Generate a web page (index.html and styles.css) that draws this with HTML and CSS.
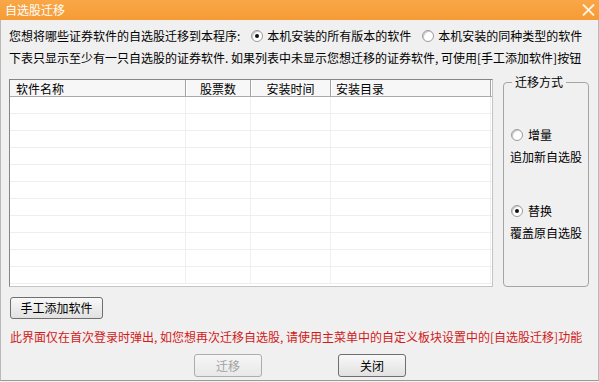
FILE: index.html
```html
<!DOCTYPE html>
<html lang="zh-CN">
<head>
<meta charset="utf-8">
<title>自选股迁移</title>
<link rel="stylesheet" href="styles.css">
</head>
<body>
<div class="window">
  <div class="titlebar">
    <span class="title">自选股迁移</span>
    <svg class="close" width="13" height="12" viewBox="0 0 13 12"><path d="M1 0.5 L12 11.5 M12 0.5 L1 11.5" stroke="#fff3e6" stroke-width="1.8" fill="none"/></svg>
  </div>
  <div class="content">
    <div class="line question">
      <span>您想将哪些证券软件的自选股迁移到本程序:</span>
      <span class="opt opt-a"><span class="radio checked"></span>本机安装的所有版本的软件</span>
      <span class="opt opt-b"><span class="radio"></span>本机安装的同种类型的软件</span>
    </div>
    <div class="line">下表只显示至少有一只自选股的证券软件. 如果列表中未显示您想迁移的证券软件, 可使用[手工添加软件]按钮</div>
    <div class="main">
      <div class="list">
        <div class="list-head">
          <div class="hc c1">软件名称</div>
          <div class="hc c2">股票数</div>
          <div class="hc c3">安装时间</div>
          <div class="hc c4">安装目录</div>
        </div>
        <div class="list-body">
          <div class="row"><div class="cell c1"></div><div class="cell c2"></div><div class="cell c3"></div><div class="cell c4"></div></div>
          <div class="row"><div class="cell c1"></div><div class="cell c2"></div><div class="cell c3"></div><div class="cell c4"></div></div>
          <div class="row"><div class="cell c1"></div><div class="cell c2"></div><div class="cell c3"></div><div class="cell c4"></div></div>
          <div class="row"><div class="cell c1"></div><div class="cell c2"></div><div class="cell c3"></div><div class="cell c4"></div></div>
          <div class="row"><div class="cell c1"></div><div class="cell c2"></div><div class="cell c3"></div><div class="cell c4"></div></div>
          <div class="row"><div class="cell c1"></div><div class="cell c2"></div><div class="cell c3"></div><div class="cell c4"></div></div>
          <div class="row"><div class="cell c1"></div><div class="cell c2"></div><div class="cell c3"></div><div class="cell c4"></div></div>
          <div class="row"><div class="cell c1"></div><div class="cell c2"></div><div class="cell c3"></div><div class="cell c4"></div></div>
          <div class="row"><div class="cell c1"></div><div class="cell c2"></div><div class="cell c3"></div><div class="cell c4"></div></div>
          <div class="row"><div class="cell c1"></div><div class="cell c2"></div><div class="cell c3"></div><div class="cell c4"></div></div>
          <div class="row"><div class="cell c1"></div><div class="cell c2"></div><div class="cell c3"></div><div class="cell c4"></div></div>
        </div>
      </div>
      <fieldset class="group">
        <legend>迁移方式</legend>
        <div class="gopt first"><span class="radio"></span>增量</div>
        <div class="gdesc">追加新自选股</div>
        <div class="gopt second"><span class="radio checked"></span>替换</div>
        <div class="gdesc">覆盖原自选股</div>
      </fieldset>
    </div>
    <div class="add-row"><button class="btn btn-add">手工添加软件</button></div>
    <div class="notice">此界面仅在首次登录时弹出, 如您想再次迁移自选股, 请使用主菜单中的自定义板块设置中的[自选股迁移]功能</div>
    <div class="actions">
      <button class="btn btn-act" disabled>迁移</button>
      <button class="btn btn-act">关闭</button>
    </div>
  </div>
</div>
</body>
</html>
```
FILE: styles.css
```css
* { box-sizing: border-box; }
html, body { margin: 0; padding: 0; }
body {
  width: 599px;
  height: 382px;
  background: #f0f0f0;
  font-family: "Noto Sans CJK SC", "Noto Sans", sans-serif;
  font-size: 12px;
  color: #000;
  overflow: hidden;
}
.window {
  width: 599px;
  height: 382px;
  display: flex;
  flex-direction: column;
}
.titlebar {
  height: 20px;
  flex: none;
  background: linear-gradient(#f9a748, #f69b34);
  display: flex;
  align-items: center;
  justify-content: space-between;
  padding: 0 4px 0 5px;
}
.title {
  color: #fff;
  font-size: 12px;
  line-height: 20px;
}
.close { display: block; margin-top: -1px; }
.content {
  flex: 1;
  background: #f0f0f0;
  border-left: 1px solid #b8b8b8;
  border-right: 1px solid #b8b8b8;
  border-bottom: 1px solid #9a9a9a;
  padding: 5px 0 0 8px;
  display: flex;
  flex-direction: column;
  margin-bottom: 1px;
}
.line {
  height: 22px;
  line-height: 22px;
  white-space: nowrap;
  display: flex;
  align-items: center;
}
.opt { display: flex; align-items: center; }
.opt-a { margin-left: 11px; }
.opt-b { margin-left: 11px; }
.radio {
  display: inline-block;
  width: 12px;
  height: 12px;
  border-radius: 50%;
  border: 1px solid #9c9c9c;
  background: radial-gradient(circle at 60% 60%, #ffffff 50%, #e2e2e2 100%);
  box-shadow: inset 1px 1px 0 #c8c8c8;
  margin-right: 4px;
  position: relative;
  flex: none;
}
.radio.checked::after {
  content: "";
  position: absolute;
  left: 3px;
  top: 3px;
  width: 4px;
  height: 4px;
  border-radius: 50%;
  background: #111;
}
.main {
  margin-top: 10px;
  height: 208px;
  display: flex;
}
.list {
  width: 484px;
  height: 208px;
  border: 1px solid #858585;
  border-right-color: #c4c4c4;
  border-bottom-color: #c4c4c4;
  background: #fff;
  display: flex;
  flex-direction: column;
  overflow: hidden;
}
.list-head {
  display: flex;
  height: 17px;
  flex: none;
  background: #f7f7f7;
  border-bottom: 1px solid #a9a9a9;
}
.hc {
  height: 16px;
  line-height: 18px;
  border-right: 1px solid #a3a3a3;
  box-shadow: 1px 0 0 #fff;
  white-space: nowrap;
  overflow: hidden;
}
.c1 { width: 176px; padding-left: 6px; }
.c2 { width: 65px; text-align: center; }
.c3 { width: 80px; text-align: center; }
.c4 { width: 160px; padding-left: 5px; }
.list-body { flex: 1; }
.row {
  display: flex;
  height: 17px;
  border-bottom: 1px solid #eeeeee;
}
.cell {
  height: 16px;
  border-right: 1px solid #f0f0f0;
}
.group {
  margin: -5px 0 0 10px;
  width: 86px;
  border: 1px solid #a5a5a5;
  border-radius: 4px;
  padding: 0 4px 0 6px;
  display: flex;
  flex-direction: column;
  min-width: 0;
}
.group legend {
  padding: 0 3px;
  margin-left: 2px;
  line-height: 16px;
  font-size: 12px;
}
.gopt {
  height: 22px;
  line-height: 22px;
  display: flex;
  align-items: center;
  margin-left: 1px;
}
.gopt .radio { margin-right: 5px; }
.gopt.first { margin-top: 34px; }
.gopt.second { margin-top: 32px; }
.gdesc {
  height: 22px;
  line-height: 22px;
  white-space: nowrap;
}
.btn {
  font-family: "Noto Sans CJK SC", "Noto Sans", sans-serif;
  font-size: 12px;
  color: #000;
  background: linear-gradient(#f8f8f8, #e1e1e1);
  border: 1px solid #6f6f6f;
  border-radius: 3px;
  padding: 0;
  line-height: 20px;
}
.add-row { margin-top: 10px; display: flex; }
.btn-add { width: 93px; height: 22px; margin-left: 1px; }
.notice {
  margin-top: 7px;
  height: 22px;
  line-height: 22px;
  color: #d11a1a;
  white-space: nowrap;
  margin-left: 1px;
}
.actions {
  margin-top: 6px;
  display: flex;
  gap: 76px;
  padding-left: 185px;
}
.btn-act { width: 68px; height: 23px; }
.btn-act:disabled {
  color: #a3a3a3;
  border-color: #adadad;
  background: linear-gradient(#f6f6f6, #e8e8e8);
}
```
